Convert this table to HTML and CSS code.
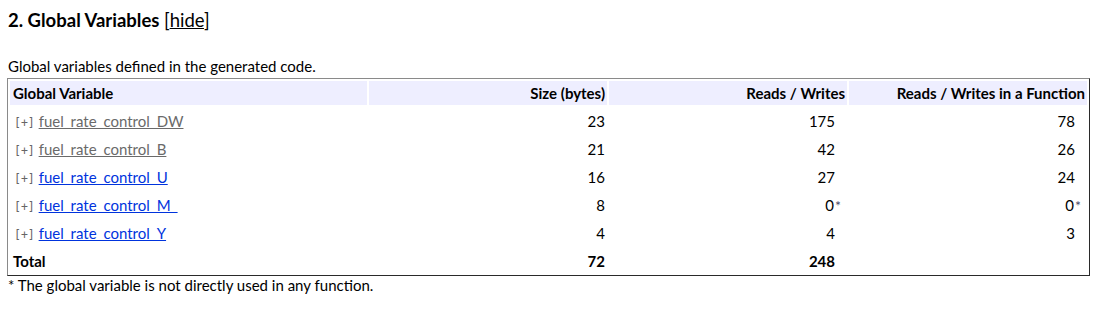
FILE: index.html
```html
<!DOCTYPE html>
<html>
<head>
<meta charset="utf-8">
<link rel="stylesheet" href="styles.css">
</head>
<body>
<h3 class="title">2. Global Variables <span class="hide">[<a class="hidelink" href="#">hide</a>]</span></h3>
<p class="caption">Global variables defined in the generated code.</p>
<table class="report">
  <colgroup>
    <col class="c-name">
    <col class="c-num">
    <col class="c-num">
    <col class="c-num">
  </colgroup>
  <thead>
    <tr>
      <th class="col-name">Global Variable</th>
      <th class="col-num">Size (bytes)</th>
      <th class="col-num">Reads / Writes</th>
      <th class="col-num">Reads / Writes in a Function</th>
    </tr>
  </thead>
  <tbody>
    <tr>
      <td><span class="expand">[+]</span> <a class="var visited" href="#">fuel_rate_control_DW</a></td>
      <td class="num">23</td>
      <td class="num pad">175</td>
      <td class="num pad">78</td>
    </tr>
    <tr>
      <td><span class="expand">[+]</span> <a class="var visited" href="#">fuel_rate_control_B</a></td>
      <td class="num">21</td>
      <td class="num pad">42</td>
      <td class="num pad">26</td>
    </tr>
    <tr>
      <td><span class="expand">[+]</span> <a class="var" href="#">fuel_rate_control_U</a></td>
      <td class="num">16</td>
      <td class="num pad">27</td>
      <td class="num pad">24</td>
    </tr>
    <tr>
      <td><span class="expand">[+]</span> <a class="var" href="#">fuel_rate_control_M_</a></td>
      <td class="num">8</td>
      <td class="num pad">0<span class="star">*</span></td>
      <td class="num pad">0<span class="star">*</span></td>
    </tr>
    <tr>
      <td><span class="expand">[+]</span> <a class="var" href="#">fuel_rate_control_Y</a></td>
      <td class="num">4</td>
      <td class="num pad">4</td>
      <td class="num pad">3</td>
    </tr>
    <tr class="total">
      <td>Total</td>
      <td class="num">72</td>
      <td class="num pad">248</td>
      <td class="num pad"></td>
    </tr>
  </tbody>
</table>
<p class="note">* The global variable is not directly used in any function.</p>
</body>
</html>
```
FILE: styles.css
```css
html, body {
  margin: 0;
  padding: 0;
  background: #ffffff;
}
body {
  padding: 0 5px 0 7px;
  font-family: Lato, "Open Sans", sans-serif;
  font-size: 15px;
  color: #000000;
}
.title {
  margin: 0;
  padding-top: 8px;
  height: 27px;
  line-height: 24px;
  font-size: 18.5px;
  font-weight: bold;
  padding-left: 1px;
}
.hide {
  font-weight: normal;
}
.hidelink {
  color: #000000;
  text-decoration: underline;
}
.caption {
  margin: 0;
  padding-top: 20px;
  padding-left: 1px;
  line-height: 22px;
  height: 23px;
}
.report {
  width: 1083px;
  table-layout: fixed;
  border-collapse: separate;
  border-spacing: 2px;
  border-style: solid;
  border-width: 1px;
  border-color: #8a8a8a #2a2a2a #2a2a2a #8a8a8a;
}
.c-name {
  width: 357px;
}
.c-num {
  width: 238px;
}
.report th {
  background: #eeeeff;
  font-weight: bold;
  height: 24px;
  padding: 0 2px 0 3px;
  text-align: right;
  white-space: nowrap;
}
.report th.col-name {
  text-align: left;
}
.report td {
  height: 26px;
  padding: 2px 2px 0 3px;
  box-sizing: border-box;
  white-space: nowrap;
}
.report td.num {
  text-align: right;
}
.report td.pad {
  padding-right: 12px;
}
.star {
  display: inline-block;
  width: 0;
  overflow: visible;
  font-size: 14px;
  color: #4a4a6a;
  vertical-align: 0;
  padding-left: 1px;
}
.expand {
  font-family: "DejaVu Sans Mono", monospace;
  font-size: 11.5px;
  color: #666666;
  margin-left: 1px;
}
.var {
  color: #0033dd;
  text-decoration: underline;
}
.var.visited {
  color: #6a6a6a;
}
.total td {
  font-weight: bold;
}
.note {
  margin: 0;
  padding-left: 1px;
  line-height: 18px;
}
```
